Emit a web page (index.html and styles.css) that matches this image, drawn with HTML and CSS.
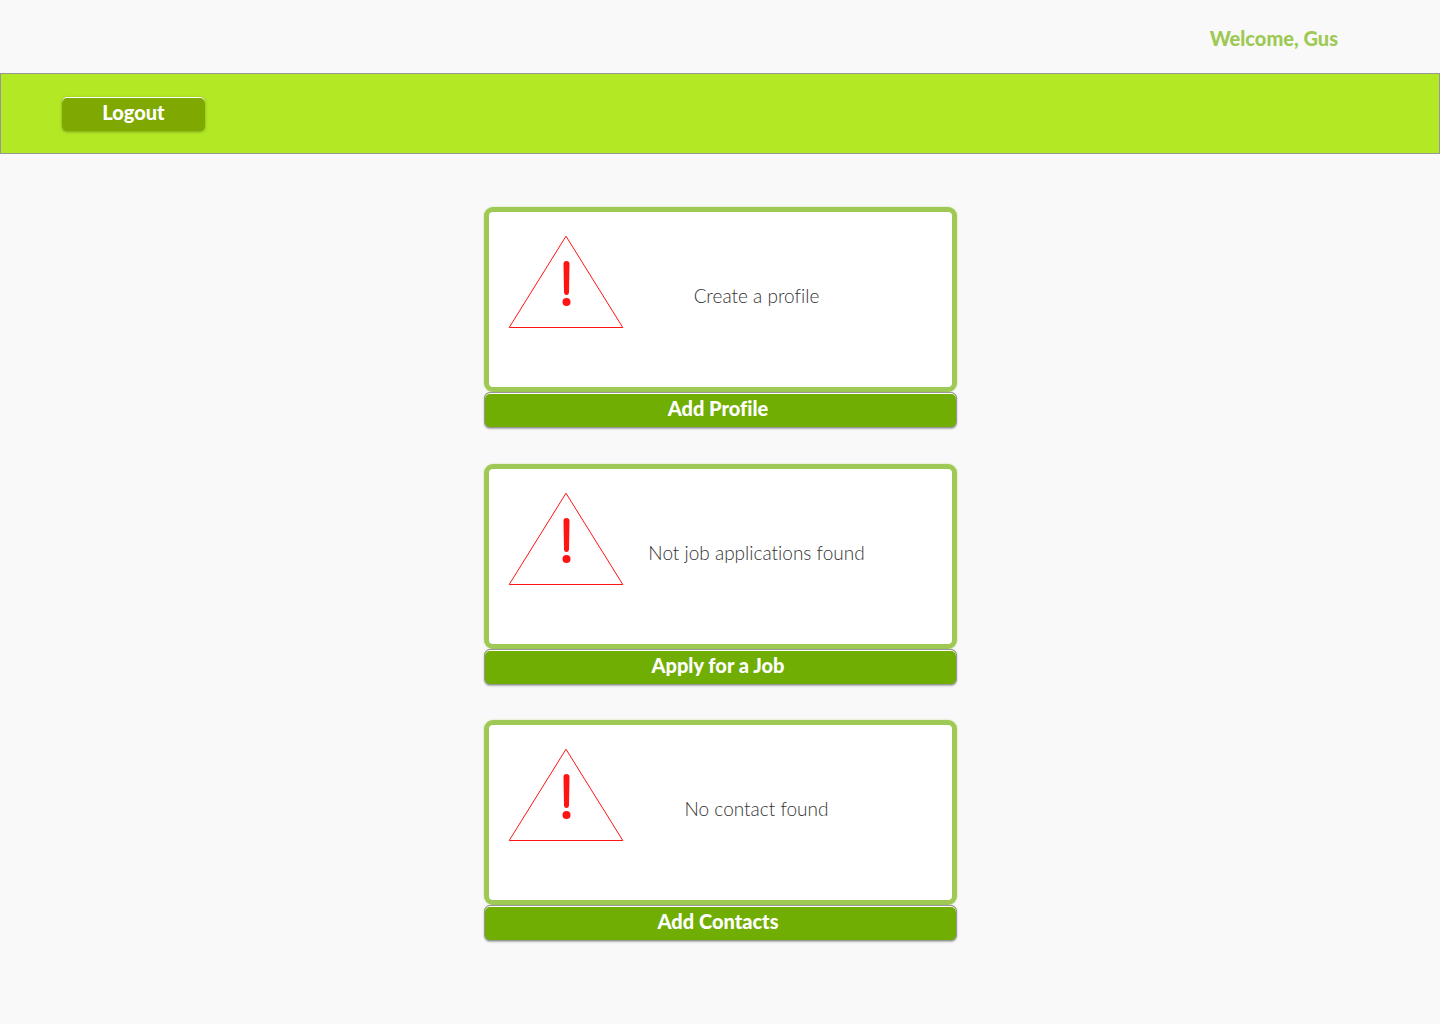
FILE: index.html
```html
<!DOCTYPE html>
<html lang="en">
<head>
  <meta charset="utf-8">
  <meta name="viewport" content="width=device-width, initial-scale=1">
  <title>Dashboard</title>
  <link rel="stylesheet" href="styles.css">
</head>
<body>
  <header class="topbar">
    <p class="welcome">Welcome, Gus</p>
  </header>
  <nav class="navbar">
    <button class="logout" type="button">Logout</button>
  </nav>
  <main class="content">
    <section class="panel">
      <div class="card">
        <svg class="warning" viewBox="0 0 116 94" aria-hidden="true">
          <path class="outline" d="M58 1.2 L1.200 92.500 H114.800 Z"/>
          <path class="mark" d="M55.500 29 Q55.500 26 58.500 26 Q61.500 26 61.500 29 L61 57.500 Q60.800 60 58.500 60 Q56.200 60 56 57.500 Z"/>
          <circle class="mark" cx="58.500" cy="67" r="4"/>
        </svg>
        <p class="message">Create a profile</p>
      </div>
      <button class="action" type="button">Add Profile</button>
    </section>
    <section class="panel">
      <div class="card">
        <svg class="warning" viewBox="0 0 116 94" aria-hidden="true">
          <path class="outline" d="M58 1.2 L1.200 92.500 H114.800 Z"/>
          <path class="mark" d="M55.500 29 Q55.500 26 58.500 26 Q61.500 26 61.500 29 L61 57.500 Q60.800 60 58.500 60 Q56.200 60 56 57.500 Z"/>
          <circle class="mark" cx="58.500" cy="67" r="4"/>
        </svg>
        <p class="message">Not job applications found</p>
      </div>
      <button class="action" type="button">Apply for a Job</button>
    </section>
    <section class="panel">
      <div class="card">
        <svg class="warning" viewBox="0 0 116 94" aria-hidden="true">
          <path class="outline" d="M58 1.2 L1.200 92.500 H114.800 Z"/>
          <path class="mark" d="M55.500 29 Q55.500 26 58.500 26 Q61.500 26 61.500 29 L61 57.500 Q60.800 60 58.500 60 Q56.200 60 56 57.500 Z"/>
          <circle class="mark" cx="58.500" cy="67" r="4"/>
        </svg>
        <p class="message">No contact found</p>
      </div>
      <button class="action" type="button">Add Contacts</button>
    </section>
  </main>
</body>
</html>
```
FILE: styles.css
```css
* {
  box-sizing: border-box;
}

body {
  display: flex;
  flex-direction: column;
  min-height: 100vh;
  margin: 0;
  background: #f9f9f9;
  color: #333;
  font: 300 19px/24px Lato, "Open Sans", sans-serif;
  font-variant-ligatures: none;
}

p {
  margin: 0;
}

button {
  border: 0;
  color: #fff;
  font: 900 20px/24px Lato, "Open Sans", sans-serif;
  font-variant-ligatures: none;
  text-align: center;
  cursor: pointer;
}

.topbar {
  display: flex;
  justify-content: flex-end;
  padding: 26px 102px 23px;
}

.welcome {
  color: #9dc954;
  font-size: 20px;
  font-weight: 900;
}

.navbar {
  padding: 23px 61px 22px;
  border: 1px solid #979797;
  background: #b2e824;
}

.logout {
  display: block;
  width: 143px;
  padding: 3px 0 7px;
  border-radius: 5px;
  background: #7fa900;
  box-shadow: 0 1px 3px rgba(0, 0, 0, 0.3), inset 0 1px #fff;
}

.content {
  display: flex;
  flex: 1;
  flex-direction: column;
  align-items: center;
  justify-content: space-between;
  gap: 16px;
  padding: 53px 16px 83px;
}

.panel {
  width: 100%;
  max-width: 473px;
}

.card {
  display: flex;
  align-items: flex-start;
  min-height: 185px;
  padding: 23px 62px 40px 19px;
  border: 5px solid #9dc954;
  border-radius: 9px;
  background: #fff;
  box-shadow: 0 0 2px rgba(157, 201, 84, 0.6);
}

.warning {
  flex: none;
  width: 116px;
  height: 94px;
}

.outline {
  fill: none;
  stroke: #ff1414;
}

.mark {
  fill: #ff1414;
}

.message {
  flex: 1;
  padding-top: 49px;
  text-align: center;
}

.action {
  display: block;
  width: 100%;
  padding: 3px 4px 7px 0;
  border: 1px solid #979797;
  border-radius: 6px;
  background: #70ae04;
  box-shadow: 0 1px 2px rgba(0, 0, 0, 0.3), inset 0 1px #fff;
}
```
